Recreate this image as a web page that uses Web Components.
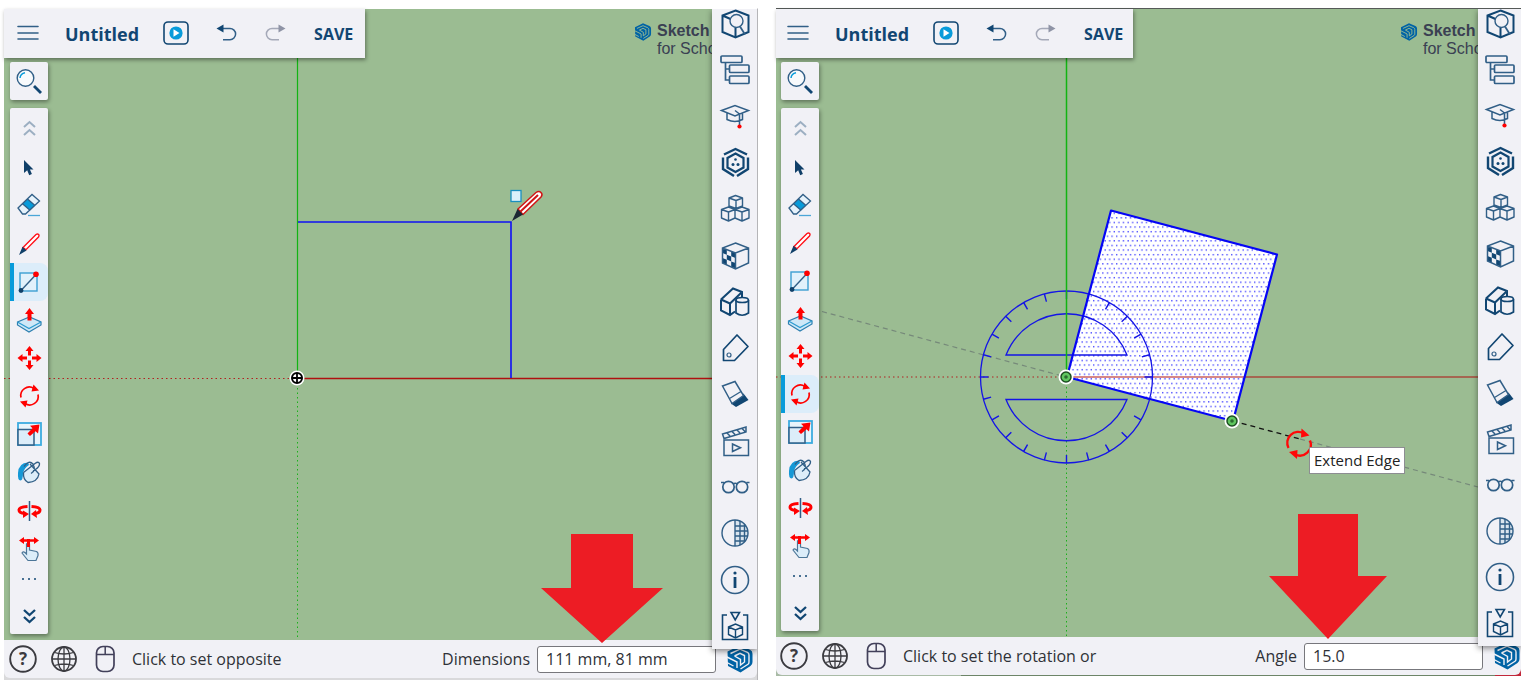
<!DOCTYPE html>
<html lang="en">
<head>
<meta charset="utf-8">
<meta name="viewport" content="width=device-width, initial-scale=1">
<title>SketchUp for Schools – measurements box</title>
<style>
  :root {
    --bar: #f1f1f6; --navy: #114672; --sky: #079bda; --pale: #dcedfa;
    --ground: #9bbc92; --red: #ff0000; --su: #0063a5; --ink: #2f3137;
  }
  body { margin: 0; background: #fff; font-family: "Open Sans", "Noto Sans", sans-serif; color: var(--ink); }
</style>
</head>
<body>
<sk-compare>
  <sk-window class="first" label="Dimensions" value="111 mm, 81 mm" hint="Click to set opposite" active="rectangle">
    <sk-scene-rectangle slot="scene"></sk-scene-rectangle>
    <sk-arrow slot="note" style="right:94px; bottom:37px"><svg width="122" height="109" viewBox="0 0 122 109"><path d="M30 0H92V54H122L61 109L0 54H30Z"/></svg></sk-arrow>
  </sk-window>
  <sk-window class="second" label="Angle" value="15.0" hint="Click to set the rotation or" active="rotate">
    <sk-scene-rotate slot="scene"></sk-scene-rotate>
    <sk-arrow slot="note" style="right:134px; bottom:37px"><svg width="118" height="125" viewBox="0 0 118 125"><path d="M29 0H89V62H118L59 125L0 62H29Z"/></svg></sk-arrow>
  </sk-window>
</sk-compare>

<script>
const ICONS = {
  menu: `<g stroke="#315f87" stroke-width="1.6" stroke-linecap="round"><path d="M4 6.500h20M4 13h20M4 19h20"/></g>`,
  play: `<rect x="2" y="2" width="24" height="22" rx="4" stroke="#114672" stroke-width="1.6"/><circle cx="14" cy="13" r="6.600" fill="#079bda"/><path d="M11.500 9.300v7.400l6-3.700z" fill="#fff"/>`,
  undo: `<path d="M10 8.500h8a5.600 5.600 0 0 1 0 11.200h-7" stroke="#315f87" stroke-width="1.500"/><path d="M4.500 8.500l7-4v8z" fill="#114672"/>`,
  redo: `<path d="M18 8.500h-8a5.600 5.600 0 0 0 0 11.200h7" stroke="#a5a9b8" stroke-width="1.500"/><path d="M23.500 8.500l-7-4v8z" fill="#8f94a6"/>`,
  search: `<circle cx="10.500" cy="11" r="8.300" stroke="#315f87" stroke-width="1.400" fill="#f8fafc"/><path d="M5 11a6 6 0 0 1 5-5.300" stroke="#079bda" stroke-width="1.500"/><path d="M19 19l7 7" stroke="#114672" stroke-width="2.800"/>`,
  up: `<path d="M9 13l5.500-5 5.500 5M9 21l5.500-5 5.500 5" stroke="#9cafc2" stroke-width="2"/>`,
  down: `<path d="M9 8l5.500 5 5.500-5M9 15l5.500 5 5.500-5" stroke="#114672" stroke-width="2.300"/>`,
  dots: `<g fill="#114672"><circle cx="8" cy="14" r="1"/><circle cx="14" cy="14" r="1"/><circle cx="20" cy="14" r="1"/></g>`,
  select: `<path d="M9 7v13l3.200-2.800 2 5 2.700-1.200-2-4.600h3.600z" fill="#103f68"/>`,
  eraser: `<path d="M3 17L17 3.500l7.500 6.500L10.500 23.500H8z" fill="#e6f2fb"/><path d="M7.500 12.700L12.500 8l7.500 6.500-5 5z" fill="#079bda"/><path d="M3 17L17 3.500l7.500 6.500L10.500 23H7.500zM7.500 12.700l7.500 6.600M12.500 8l7.500 6.600" stroke="#315f87" stroke-width="1.300"/><path d="M13 24.500h12" stroke="#4ba6d8" stroke-width="1.300"/>`,
  pencil: `<path d="M8 17.500L21 4.500q1.500-1 2.700 0 .8 1.200-.2 2.500L11 19.700z" fill="#fff" stroke="#ff1018" stroke-width="1.400"/><path d="M7.500 16.800l4 3.700L4 25z" fill="#103f68"/>`,
  rectangle: `<rect x="5" y="5" width="17" height="18" fill="#e2f1fb" stroke="#3c9fd2" stroke-width="1.400"/><path d="M6 22.500L21 6.500" stroke="#315f87" stroke-width="1.300"/><circle cx="21" cy="6.300" r="2.800" fill="#f00"/><circle cx="6" cy="22.500" r="2.400" fill="#103f68"/>`,
  push: `<path d="M2.500 16L14.500 11 26 16v3L14 26 2.500 19z" fill="#cfe8f7" stroke="#2d7fb0" stroke-width="1.200"/><path d="M2.500 16L14 22.500 26 16" stroke="#2d9bd0" stroke-width="1.200"/><path d="M14.500 2l4.500 6h-2.500v6.500h-4V8H10z" fill="#f00"/>`,
  move: `<g fill="#f00"><path d="M14.500 2l4 5h-2.500v4.500h-3V7h-2.500z"/><path d="M14.500 26l4-5h-2.500v-4.500h-3V21h-2.500zM2.500 14l5-4v2.500H12v3H7.500V18zM26.500 14l-5-4v2.500H17v3h4.500V18z"/></g>`,
  rotate: `<path d="M6 15.500A8.500 8.500 0 0 1 19 6.500M23 12.500A8.500 8.500 0 0 1 10 21.500" stroke="#f00" stroke-width="1.700"/><path d="M18.500 2.500L24 8.500l-7.500 1zM10.500 25.500L5 19.500l7.500-1z" fill="#f00"/>`,
  scale: `<rect x="3" y="3" width="23" height="22" fill="#e8f4fb" stroke="#3cabdf" stroke-width="1.800"/><rect x="3" y="9.500" width="16" height="15.500" fill="#dcedf9" stroke="#315f87" stroke-width="1.500"/><path d="M24.500 4.500l-1.500 9-2.500-2.300-5.500 4.800-2.500-2.500 5-5.300-2.500-2.500z" fill="#f00"/>`,
  paint: `<path d="M8.500 14.500L17 8.500l7 7.500q-1.500 8-11 8.500-5-2.500-4.500-10z" fill="#dcedf9"/><path d="M13 4.500Q3.500 5 3 15q-.5 7.500 2.500 7.500 2.500-.5 2.500-7Q9 10 14 7z" fill="#1598d6"/><path d="M8.500 14.500q-.5 7.500 4.500 10 9.500-.5 11-8.500L15 6M9 8.500Q14 1.500 18 6q3.500 6.500-2 9.500M8.500 14.500L20 5.500q3.500-2.500 4.500 0 .3 3-4 6" stroke="#315f87" stroke-width="1.300"/>`,
  flip: `<path d="M12.500 9.500Q4 10 4 13t6 3.500M16.500 9.500Q25 10 25 13t-5 3.500" stroke="#f00" stroke-width="3"/><path d="M8 13.500l6 3.500-6 4zM21 13l-5 4 6 4z" fill="#f00"/><path d="M14.500 4v20" stroke="#315f87" stroke-width="1.500"/>`,
  touch: `<path d="M11.500 9q2-2 3 0v6l7 1.500q2 1 1.500 4l-2 5h-8L7 18q1-2 3-.5l1.500 1.500z" fill="#dcedf9" stroke="#4c7698" stroke-width="1.200"/><path d="M4 5.500L9 2v2.300h10V2l5 3.500L19 9V6.700H9V9z" fill="#f00"/><path d="M12 4h3v8h-3z" fill="#f00"/>`,
  help: `<circle cx="14" cy="14" r="12.800" stroke="#3b3b40" stroke-width="1.900"/><text x="14" y="20" text-anchor="middle" font-family="Open Sans, sans-serif" font-size="17" font-weight="700" fill="#3b3b40">?</text>`,
  globe: `<g stroke="#3b3b40" stroke-width="1.300"><circle cx="14" cy="14" r="12" stroke-width="1.800"/><ellipse cx="14" cy="14" rx="6" ry="12"/><path d="M14 2v24M2 14h24M4.500 7.500q9.500 3 19 0M4.500 20.500q9.500-3 19 0"/></g>`,
  mouse: `<rect x="5.500" y="1.500" width="17.500" height="25" rx="6.500" stroke="#42405a" stroke-width="1.700"/><path d="M6 9.500h17M14.200 2v7.500" stroke="#42405a" stroke-width="1.500"/>`,
  hexsearch: `<path d="M15.500 1.500l13 5v16.500l-13 5.500-13-5.500V6.500zM15.500 28V18M2.500 6.500l8 3.500" stroke="#114672" stroke-width="2"/><circle cx="16.500" cy="12" r="6.500" fill="#f1f1f6" stroke="#315f87" stroke-width="1.400"/><path d="M20 17.500l5 8" stroke="#315f87" stroke-width="1.800"/>`,
  outliner: `<g stroke="#315f87" stroke-width="1.700"><rect x="1" y="1" width="21" height="6.500" rx="1"/><rect x="9.500" y="10" width="19.500" height="7.500" rx="1"/><rect x="9.500" y="21" width="19.500" height="7.500" rx="1"/><path d="M5.500 8v17H9M5.500 14H9"/></g>`,
  cap: `<g stroke="#315f87" stroke-width="1.500"><path d="M1.500 8.500L15 3.500l13.500 5L15 14zM7 11v6.500q8 4 15.500 0V11M15 8.500l4.500 3.500v11"/></g><circle cx="19.500" cy="24.500" r="2.100" fill="#f00"/>`,
  hexes: `<path d="M4 6.500L15.500 1l11.500 5.500M3 9.500v11.500l11 7M28 9.500v11.500l-11 7" stroke="#114672" stroke-width="2.400"/><path d="M15.500 5.500L23.500 10v9.500L15.500 24l-8-4.500V10z" stroke="#114672" stroke-width="2.200"/><g fill="#114672"><circle cx="15.500" cy="11.500" r="1.300"/><circle cx="13" cy="16.500" r="1.500"/><circle cx="18" cy="16.500" r="1.500"/></g>`,
  cubes: `<g stroke="#315f87" stroke-width="1.400" stroke-linejoin="round"><path d="M9 4l6.500-2.500L22.500 4v8L16 14.500 9 12zM9 4L16 6.500 22.500 4M16 6.500v8M1.500 15.500l7-2.500 6.500 2.500v8.500l-6.500 3-7-3zM1.500 15.500l7 2.500 6.500-2.500M8.500 18v9M15 15.500l7-2.500 7 2.500v8.500l-7 3-7-3M15 15.500l7 2.500 7-2.500M22 18v9"/></g>`,
  checker: `<g fill="#114672"><path d="M2.500 7l4.300 1.700v5L2.500 12zM11.200 10.300l4.300 1.700v5l-4.300-1.700zM6.800 13.700l4.400 1.700v5l-4.400-1.800zM2.500 17l4.300 1.700v5L2.500 22zM11.200 20.400l4.300 1.700v5.500l-4.300-1.800z"/></g><path d="M15.500 2l13 5v15l-13 6-13-6V7zM2.500 7l13 5 13-5M15.500 12v16" stroke="#315f87" stroke-width="1.500"/>`,
  shapes: `<g stroke="#114672" stroke-width="2"><path d="M1 12.500L13 1.500l9 3.500v5M1 12.500l9 4L21 6M1 12.500v11l9 4.500 5-3.500M10 16.500V28"/><g fill="#f1f1f6" stroke-width="1.700"><path d="M16 13v13q6 4.500 12.500 0V13"/><ellipse cx="22.200" cy="13" rx="6.200" ry="2.500"/></g></g>`,
  tag: `<path d="M17 2l11 11.500L14.500 27.500h-11V16.500z" stroke="#114672" stroke-width="1.700" stroke-linejoin="round"/><circle cx="9" cy="22" r="2" stroke="#315f87" stroke-width="1.200"/>`,
  styles: `<path d="M11 24.500l12.500-10 5 6.500-12.500 7z" fill="#114672"/><path d="M2.500 7L15 2.500l8.500 14-11.500 8z" fill="#f1f1f6" stroke="#315f87" stroke-width="1.500"/><path d="M9.500 19.500l11.500-7" stroke="#315f87" stroke-width="1.300"/>`,
  clapper: `<g stroke="#315f87" stroke-width="1.500"><rect x="4" y="14" width="24.500" height="15.500"/><path d="M12.500 18v7.500l8-3.700zM2.500 8L26 1v5L4 12.500zM7 7l3 3M12 5.500l3 3M17 4l3 3M22 2.500l3 3"/></g>`,
  glasses: `<g stroke="#315f87" stroke-width="1.700"><circle cx="8.500" cy="15" r="5.700"/><circle cx="22" cy="15" r="5.700"/><path d="M13 12q2.200-1.500 4.500 0M1 10.500h3M26.500 10.500h3"/></g>`,
  mesh: `<path d="M15 2a13 13 0 0 1 0 26z" fill="#dbe5ee"/><g stroke="#315f87" stroke-width="1.400"><circle cx="15" cy="15" r="13"/><path d="M15 2v26M20 3v24M24.500 6v18M15 8h11M15 13h13M15 18h13M15 23h10"/></g>`,
  info: `<circle cx="15" cy="15" r="13.500" stroke="#315f87" stroke-width="1.600"/><path d="M15 12v11" stroke="#114672" stroke-width="2.800"/><circle cx="15" cy="8" r="1.600" fill="#114672"/>`,
  printbox: `<g stroke="#114672" stroke-width="1.600"><path d="M7 4H2.500v24.500h25V4H23M11 1.500h8.500L15.200 9z"/><path d="M8.500 16l7-3 7 3v7.500l-7 3.500-7-3.500zM8.500 16l7 3 7-3M15.500 19v8" stroke-width="1.400"/></g>`,
  su: `<path d="M1.500 6.500L14 .5l10 4.200q2.500 1 2.500 4V17q0 2.700-2 4L14.500 27.500 2 21z" fill="#0063a5"/><g stroke="var(--cut,#f1f1f6)" stroke-width="1.400"><path d="M4.500 8.500L14 4.200l7.500 3.200q1.500.8 1.500 2.600v7q0 1.500-1 2.300L14.500 24M8.500 11l5.500-2.700 4.500 2.200v6.500L14.500 20v-5.500L8.500 11M0 11.500l11 5.500v6M0 17l7.500 4"/></g>`
};

/* Attaches an open shadow root and fills it from a template. */
class Base extends HTMLElement {
  render(html) {
    const t = document.createElement('template');
    t.innerHTML = html;
    this.attachShadow({ mode: 'open' }).append(t.content.cloneNode(true));
  }
}

class SkIcon extends Base {
  connectedCallback() {
    if (this.shadowRoot) return;
    const n = +this.getAttribute('box') || 28;
    this.render(`<style>:host{display:block;width:${n}px;height:${n}px;flex:none}svg{display:block;overflow:visible}</style>
      <svg width="100%" height="100%" viewBox="0 0 ${n} ${n}" fill="none" aria-hidden="true">${ICONS[this.getAttribute('name')]}</svg>`);
  }
}

class SkCompare extends Base {
  connectedCallback() {
    this.render(`<style>
      :host{display:grid;grid-template-columns:754fr 745fr;gap:18px;box-sizing:border-box;min-height:100vh;padding:8px 9px 0 4px}
      </style><slot></slot>`);
  }
}

class SkArrow extends Base {
  connectedCallback() {
    this.render(`<style>:host{display:block;position:absolute;z-index:4;fill:#ed1c24;pointer-events:none}::slotted(svg){display:block}</style><slot></slot>`);
  }
}

const BUTTON = `button{all:unset;box-sizing:border-box;display:flex;align-items:center;justify-content:center;cursor:pointer}
  button:focus-visible{outline:2px solid var(--sky)}`;

class SkTopbar extends Base {
  connectedCallback() {
    this.render(`<style>
      :host{display:flex;align-items:center;gap:22px;height:49px;box-sizing:border-box;background:var(--bar);color:var(--navy);box-shadow:1px 2px 4px #0006}
      ${BUTTON}
      h1{margin:0 1px;font-size:18px;line-height:24px;font-weight:700}
      .save{margin-left:2px;font-size:16px;line-height:24px;font-weight:700}
      </style>
      <button aria-label="Menu"><sk-icon name="menu"></sk-icon></button>
      <h1>Untitled</h1>
      <button aria-label="Play"><sk-icon name="play"></sk-icon></button>
      <button aria-label="Undo"><sk-icon name="undo"></sk-icon></button>
      <button aria-label="Redo"><sk-icon name="redo"></sk-icon></button>
      <button class="save">SAVE</button>`);
  }
}

class SkTools extends Base {
  connectedCallback() {
    const names = ['select','eraser','pencil','rectangle','push','move','rotate','scale','paint','flip','touch'];
    const active = this.getAttribute('active');
    this.render(`<style>
      :host{display:flex;flex-direction:column;gap:8px;width:38px}
      ${BUTTON}
      .find,nav{background:var(--bar);border-radius:2px;box-shadow:1px 2px 4px #0006}
      .find{height:38px}
      nav{display:flex;flex-direction:column;flex:1}
      nav button{flex:38 1 0;min-height:30px}
      nav .up{flex-grow:40}
      nav .dots{flex-grow:22;min-height:18px;max-height:22px}
      nav .down{flex-grow:36;padding-top:8px}
      nav .on{background:var(--pale);border-radius:0 8px 8px 0;border-left:4px solid var(--sky);padding-right:4px}
      </style>
      <button class="find" aria-label="Search"><sk-icon name="search"></sk-icon></button>
      <nav aria-label="Tools">
        <button class="up" aria-label="Scroll up"><sk-icon name="up"></sk-icon></button>
        ${names.map(n => `<button aria-label="${n}" class="${n === active ? 'on' : ''}"><sk-icon name="${n}"></sk-icon></button>`).join('')}
        <button class="dots" aria-label="More"><sk-icon name="dots"></sk-icon></button>
        <button class="down" aria-label="Scroll down"><sk-icon name="down"></sk-icon></button>
      </nav>`);
  }
}

class SkPanels extends Base {
  connectedCallback() {
    const names = ['hexsearch','outliner','cap','hexes','cubes','checker','shapes','tag','styles','clapper','glasses','mesh','info','printbox'];
    this.render(`<style>
      :host{display:block;overflow:hidden;background:var(--bar)}
      ${BUTTON}
      nav{display:flex;flex-direction:column;height:calc(100% + 8px);margin-top:-8px}
      button{flex:1 1 0;min-height:36px}
      </style>
      <nav aria-label="Panels">${names.map(n => `<button aria-label="${n}"><sk-icon box="30" name="${n}"></sk-icon></button>`).join('')}</nav>`);
  }
}

class SkStatus extends Base {
  connectedCallback() {
    const a = k => this.getAttribute(k);
    this.render(`<style>
      :host{display:flex;align-items:center;height:38px;box-sizing:border-box;background:var(--bar);font-size:16px;line-height:24px;border-radius:0 0 6px 6px}
      ${BUTTON}
      .left{display:flex;align-items:center;gap:13px;flex:1;white-space:nowrap}
      label{margin-right:7px}
      input{box-sizing:border-box;width:179px;height:27px;margin:0 10px 0 0;padding:0 8px;border:1px solid #77777c;border-radius:3px;background:#fff;font:inherit;color:inherit}
      </style>
      <div class="left">
        <button aria-label="Help"><sk-icon name="help"></sk-icon></button>
        <button aria-label="Language"><sk-icon name="globe"></sk-icon></button>
        <button aria-label="Mouse"><sk-icon name="mouse"></sk-icon></button>
        <span>${a('hint')}</span>
      </div>
      <label for="m">${a('label')}</label><input id="m" value="${a('value')}">
      <sk-icon name="su"></sk-icon>`);
  }
}

class SkWindow extends Base {
  connectedCallback() {
    const a = k => this.getAttribute(k);
    this.render(`<style>
      :host{display:grid;position:relative;grid-template:1fr 38px / 1fr var(--rail);min-width:0}
      :host(.first){--rail:45px;border-right:1px solid #b5b5b8;border-top:1px solid #fff;padding-bottom:2px;background:linear-gradient(#d9d9db,#d9d9db) bottom/100% 12px no-repeat}
      :host(.second){--rail:43px;border-top:1px solid #555a58;padding-bottom:1px;margin-bottom:4px;background:linear-gradient(90deg,#a9bba6 185px,#6d8568 185px calc(100% - 26px),#c1273a 0) bottom/100% 12px no-repeat}
      .scene{grid-area:1/1/2/3;position:relative;overflow:hidden;background:var(--ground)}
      .ui{grid-area:1/1;position:relative;display:grid;grid-template:auto 1fr / auto 1fr;row-gap:4px}
      sk-topbar{grid-area:1/1;padding:0 12px 0 10px}
      :host(.second) sk-topbar{padding:0 10px 0 8px}
      .brand{--cut:var(--ground);grid-area:1/2;justify-self:end;display:flex;gap:5px;height:36px;margin:13px 0 0;width:78px;font:16px/18px "Liberation Sans",Arial,sans-serif;color:#3a4052;white-space:nowrap}
      .brand b{display:block}
      .brand svg{flex:none}
      sk-tools{grid-area:2/1;margin:0 0 6px 6px}
      :host(.second) sk-tools{margin-left:5px}
      sk-panels{grid-area:1/2/3/3;margin-bottom:29px;z-index:3;box-shadow:0 2px 6px #0007;clip-path:inset(0 0 -8px -8px)}
      sk-status{grid-area:2/1/3/3;position:relative;z-index:1;padding:0 3px 0 5px}
      :host(.second) sk-status{padding:0 0 0 4px}
      </style>
      <div class="scene"><slot name="scene"></slot></div>
      <div class="ui">
        <sk-topbar></sk-topbar>
        <div class="brand"><svg width="18" height="20" viewBox="0 0 28 28" fill="none">${ICONS.su}</svg><div><b>Sketch</b><span>for Scho</span></div></div>
        <sk-tools active="${a('active')}"></sk-tools>
      </div>
      <sk-status hint="${a('hint')}" label="${a('label')}" value="${a('value')}"></sk-status>
      <sk-panels></sk-panels>
      <slot name="note"></slot>`);
  }
}

const SCENE = `:host{display:block;position:absolute;inset:0}svg{display:block;width:100%;height:100%}`;

class SceneRectangle extends Base {
  connectedCallback() {
    this.render(`<style>${SCENE}</style>
      <svg viewBox="4 9 753 631" preserveAspectRatio="xMinYMin slice" fill="none">
        <path d="M297.500 9V378" stroke="#12b412" stroke-width="1.200"/>
        <path d="M297.500 379V640" stroke="#1bb01b" stroke-dasharray="1.500 3"/>
        <path d="M4 378.500H297" stroke="#b02020" stroke-dasharray="1.500 3"/>
        <path d="M297 378.500H758" stroke="#b01010" stroke-width="1.300"/>
        <path d="M298 222H511V378" stroke="#1010f5" stroke-width="1.600"/>
        <circle cx="297" cy="378" r="7.500" fill="#fff"/><circle cx="297" cy="378" r="5" fill="#fff" stroke="#000" stroke-width="2"/>
        <path d="M297 373v10M292 378h10" stroke="#000" stroke-width="1.800"/>
        <rect x="511" y="190.500" width="10" height="11" fill="#dcf1fb" stroke="#1a8fc0" stroke-width="1.300"/>
        <path d="M518 209L536 192.500q3-2 5 0 2 2 0 4.500L523 214.500z" fill="#fff" stroke="#d01414" stroke-width="1.500"/>
        <path d="M520.500 211.500L538 195" stroke="#d01414" stroke-width="2"/>
        <path d="M517.500 209l5.500 5.500L512 221z" fill="#1b2833"/>
      </svg>`);
  }
}

class SceneRotate extends Base {
  connectedCallback() {
    const node = (x, y) => `<circle cx="${x}" cy="${y}" r="7.500" fill="#fff"/><circle cx="${x}" cy="${y}" r="5" fill="#5fc75f" stroke="#1d4d22" stroke-width="1.500"/><circle cx="${x}" cy="${y}" r="1.800" fill="#2b6b30"/>`;
    this.render(`<style>${SCENE}
      .tip{position:absolute;left:533px;top:438px;box-sizing:border-box;height:27px;padding:0 4px;border:1px solid #8d8d92;background:#fff;font-size:15px;line-height:25px;color:#222;white-space:nowrap}
      </style>
      <svg viewBox="776 9 745 628" preserveAspectRatio="xMinYMin slice" fill="none">
        <defs><pattern id="dots" width="4.600" height="9.200" patternUnits="userSpaceOnUse">
          <rect width="4.600" height="9.200" fill="#fff"/><rect x=".5" y="1" width="1.300" height="1.300" fill="#3030ff"/><rect x="2.800" y="5.600" width="1.300" height="1.300" fill="#3030ff"/>
        </pattern></defs>
        <path d="M1111 210.500L1277 254.500 1233 421 1067 377z" fill="url(#dots)"/>
        <path d="M1066.500 378V637" stroke="#1bb01b" stroke-dasharray="1.500 3"/>
        <path d="M776 377H1066" stroke="#b02020" stroke-dasharray="1.500 3"/>
        <path d="M1066 377H1521" stroke="#b01010" stroke-width="1.200"/>
        <path d="M822 311.500L1066 377M1300 439L1478 487" stroke="#76897a" stroke-width="1.200" stroke-dasharray="5 4"/>
        <path d="M1233 421L1300 439" stroke="#101010" stroke-width="1.300" stroke-dasharray="5 4"/>
        <g stroke="#1414e6" stroke-width="1.300">
          <circle cx="1066.500" cy="377" r="86"/>
          <circle cx="1066.500" cy="377" r="82" stroke-width="8" pathLength="360" stroke-dasharray="1 14" stroke-dashoffset=".5"/>
          <path d="M1006 355H1127A65 65 0 0 0 1006 355zM1006 399.500H1127A65 65 0 0 1 1006 399.500z"/>
        </g>
        <path d="M1066.500 9V377" stroke="#12b412" stroke-width="1.500"/>
        <path d="M1111 210.500L1277 254.500 1233 421 1067 377z" stroke="#0505f5" stroke-width="2.200" stroke-linejoin="round"/>
        ${node(1066, 377)}${node(1232, 421)}
        <path d="M1288.500 448A11 11 0 0 1 1304 433.500M1310 440.500A11 11 0 0 1 1295 454.500" stroke="#ff0808" stroke-width="2.300"/>
        <path d="M1301.500 428.500l8 7-8.500 2zM1297 459l-8-7 8.500-2z" fill="#ff0808"/>
      </svg>
      <div class="tip" role="tooltip">Extend Edge</div>`);
  }
}

customElements.define('sk-icon', SkIcon);
customElements.define('sk-topbar', SkTopbar);
customElements.define('sk-tools', SkTools);
customElements.define('sk-panels', SkPanels);
customElements.define('sk-status', SkStatus);
customElements.define('sk-scene-rectangle', SceneRectangle);
customElements.define('sk-scene-rotate', SceneRotate);
customElements.define('sk-arrow', SkArrow);
customElements.define('sk-window', SkWindow);
customElements.define('sk-compare', SkCompare);
</script>
</body>
</html>
